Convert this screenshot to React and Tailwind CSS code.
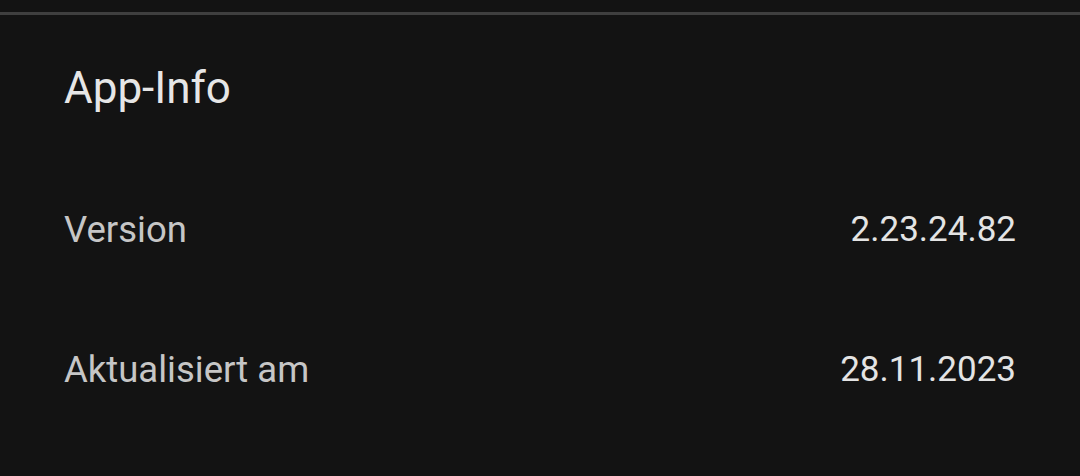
export default function App() {
  const rows = [
    { label: 'Version', value: '2.23.24.82' },
    { label: 'Aktualisiert am', value: '28.11.2023' },
  ];

  return (
    <div className="h-[476px] w-[1080px] overflow-hidden bg-[#131313] font-['Roboto',sans-serif]">
      <div className="h-3" />
      <div className="h-[3px] bg-[#3f3f3f]" />
      <div className="px-16 pt-[5px]">
        <h2 className="flex h-[140px] items-center pb-[4px] text-[44px] text-[#e6e6e6]">App-Info</h2>
        {rows.map(r => (
          <div key={r.label} className="flex h-[140px] items-center justify-between">
            <span className="text-[36.5px] text-[#c6c6c6]">{r.label}</span>
            <span className="text-[35px] text-[#e4e4e4]">{r.value}</span>
          </div>
        ))}
      </div>
    </div>
  );
}
